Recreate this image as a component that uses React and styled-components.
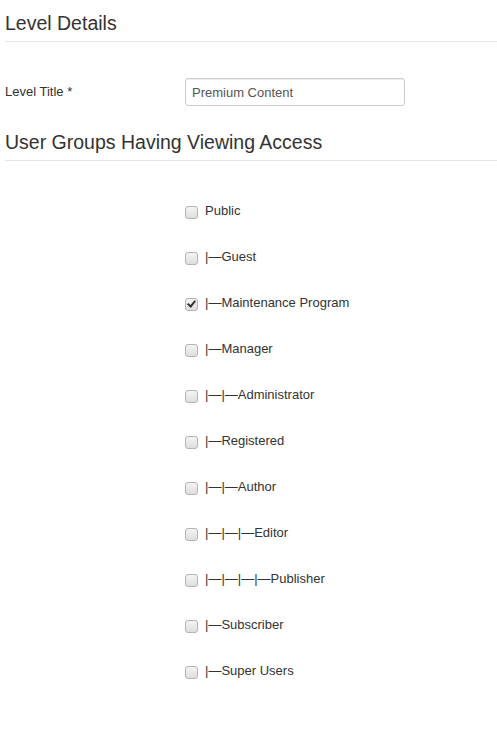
import styled, { createGlobalStyle } from 'styled-components';

const GlobalStyle = createGlobalStyle`
  body {
    margin: 0;
    background: #fff;
    font-family: "Liberation Sans", Arial, sans-serif;
    font-size: 13px;
    color: #333;
  }
`;

const Page = styled.div`
  padding: 0 0 40px 5px;
`;

const Heading = styled.h3`
  margin: 0;
  padding: 10px 0 4px;
  font-size: 19.5px;
  font-weight: normal;
  line-height: 27px;
  color: #333;
  border-bottom: 1px solid #e5e5e5;
  margin-top: ${(p) => (p.$first ? '0' : '13px')};
`;

const FormRow = styled.div`
  display: flex;
  align-items: center;
  margin-top: 36px;
`;

const Label = styled.label`
  width: 180px;
  line-height: 18px;
`;

const TextInput = styled.input`
  box-sizing: border-box;
  width: 220px;
  height: 28px;
  padding: 4px 6px;
  font-family: "Liberation Sans", Arial, sans-serif;
  font-size: 13px;
  color: #555;
  border: 1px solid #ccc;
  border-radius: 3px;
  box-shadow: inset 0 1px 1px rgba(0, 0, 0, 0.075);
  outline: none;
`;

const GroupList = styled.div`
  display: flex;
  flex-direction: column;
  padding: 27px 0 0 180px;
`;

const GroupRow = styled.label`
  display: flex;
  align-items: center;
  height: 46px;
  gap: 7px;
`;

const Check = styled.input.attrs({ type: 'checkbox' })`
  appearance: none;
  margin: 2px 0 0;
  box-sizing: border-box;
  width: 13px;
  height: 13px;
  border: 1px solid #b4b4b4;
  border-radius: 3px;
  background: linear-gradient(#f4f4f4, #dedede);
  position: relative;
  &:checked::after {
    content: '';
    position: absolute;
    left: 3px;
    top: 0px;
    width: 3px;
    height: 6px;
    border: solid #333;
    border-width: 0 2px 2px 0;
    transform: rotate(40deg);
  }
`;

const GroupName = styled.span`
  line-height: 16px;
`;

const groups = [
  { name: 'Public' },
  { name: '|—Guest' },
  { name: '|—Maintenance Program', checked: true },
  { name: '|—Manager' },
  { name: '|—|—Administrator' },
  { name: '|—Registered' },
  { name: '|—|—Author' },
  { name: '|—|—|—Editor' },
  { name: '|—|—|—|—Publisher' },
  { name: '|—Subscriber' },
  { name: '|—Super Users' },
];

export default function App() {
  return (
    <Page>
      <GlobalStyle />
      <Heading $first>Level Details</Heading>
      <FormRow>
        <Label>Level Title *</Label>
        <TextInput defaultValue="Premium Content" />
      </FormRow>
      <Heading>User Groups Having Viewing Access</Heading>
      <GroupList>
        {groups.map((g) => (
          <GroupRow key={g.name}>
            <Check defaultChecked={!!g.checked} />
            <GroupName>{g.name}</GroupName>
          </GroupRow>
        ))}
      </GroupList>
    </Page>
  );
}
